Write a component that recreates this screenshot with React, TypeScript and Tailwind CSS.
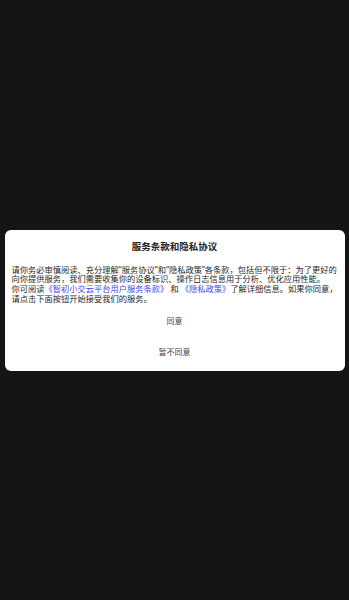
export default function App() {
  return (
    <div className="w-full h-[600px] bg-[#151515] flex items-center justify-center font-['Noto_Sans','Noto_Sans_CJK_SC',sans-serif]">
      <div className="w-[340px] bg-white rounded-[6px] flex flex-col">
        <div className="pt-[11px] text-center text-[9.5px] leading-[12px] font-bold text-[#222]">
          服务条款和隐私协议
        </div>
        <div className="mt-[12px] px-[7px] text-[8.25px] leading-[9.75px] text-[#1f1f1f] whitespace-nowrap">
          <div>请你务必审慎阅读、充分理解“服务协议”和“隐私政策”各条款，包括但不限于：为了更好的</div>
          <div>向你提供服务，我们需要收集你的设备标识、操作日志信息用于分析、优化应用性能。</div>
          <div>
            你可阅读<span className="text-[#4747ee]">《智初小交云平台用户服务条款》</span> 和 <span className="text-[#4747ee]">《隐私政策》</span>了解详细信息。如果你同意，
          </div>
          <div>请点击下面按钮开始接受我们的服务。</div>
        </div>
        <button className="h-[30px] mt-[2px] text-[8px] text-[#444]">同意</button>
        <button className="h-[30px] mt-[1px] mb-[4px] text-[8px] text-[#444]">暂不同意</button>
      </div>
    </div>
  );
}
